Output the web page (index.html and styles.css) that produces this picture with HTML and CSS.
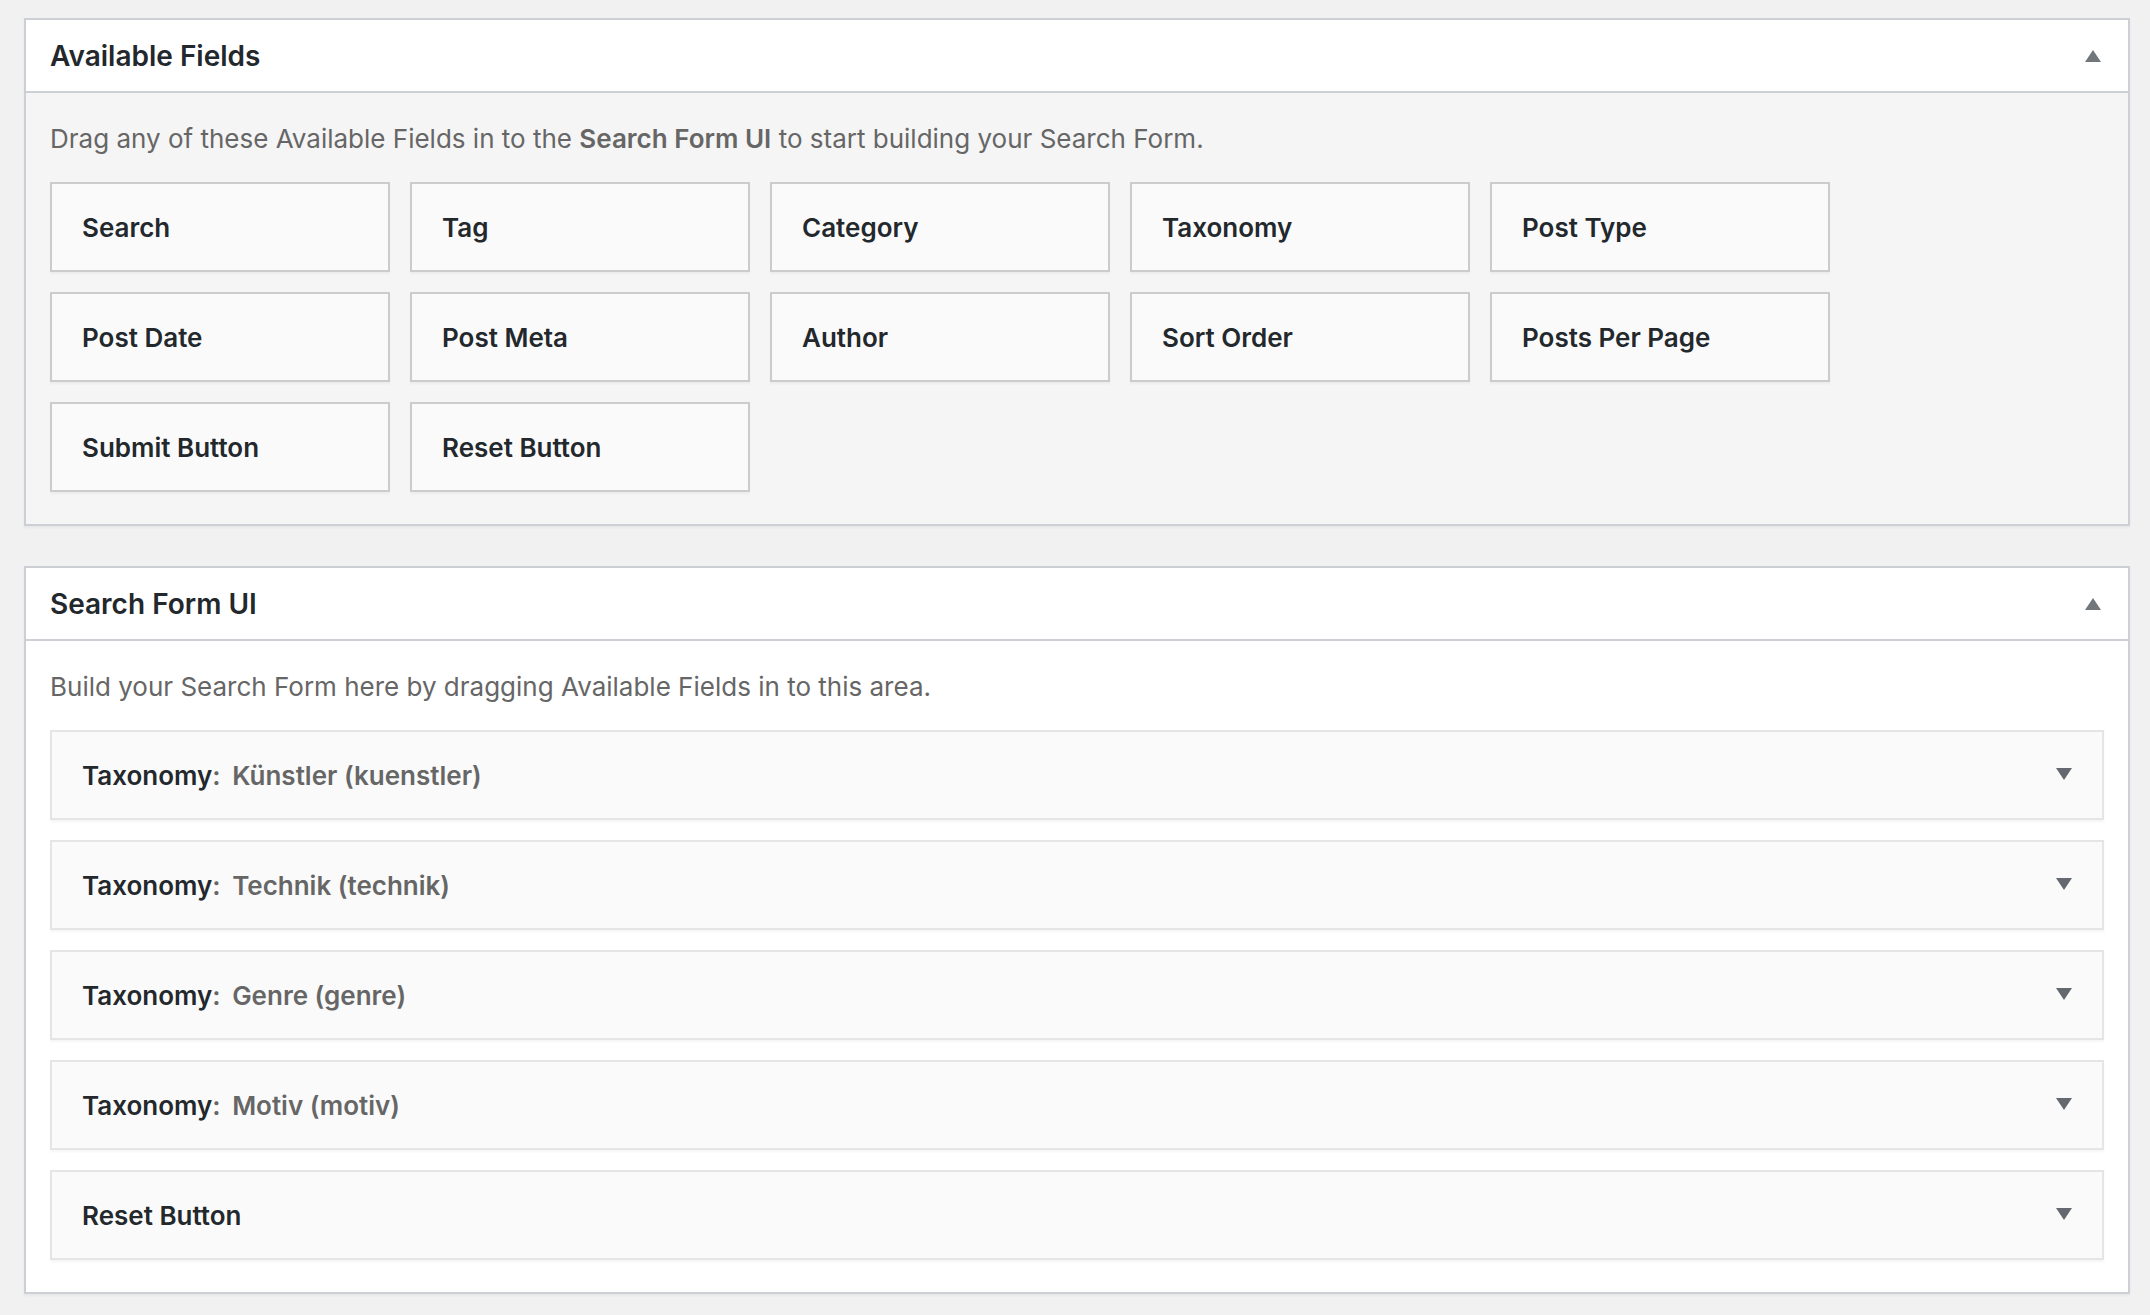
FILE: index.html
```html
<!DOCTYPE html>
<html lang="en">
<head>
<meta charset="utf-8">
<meta name="viewport" content="width=device-width, initial-scale=1">
<title>Search Form Editor</title>
<link rel="stylesheet" href="styles.css">
</head>
<body>
<main class="page">
  <section class="panel panel-available">
    <header class="panel-header">
      <h2 class="panel-title">Available Fields</h2>
      <button class="toggle" type="button" aria-label="Toggle Available Fields" aria-expanded="true"><svg class="arrow" viewBox="0 0 16 12" aria-hidden="true"><path d="M8 0 16 12H0z"/></svg></button>
    </header>
    <div class="panel-body">
      <p class="hint">Drag any of these Available Fields in to the <strong>Search Form UI</strong> to start building your Search Form.</p>
      <ul class="field-grid">
        <li class="field">Search</li>
        <li class="field">Tag</li>
        <li class="field">Category</li>
        <li class="field">Taxonomy</li>
        <li class="field">Post Type</li>
        <li class="field">Post Date</li>
        <li class="field">Post Meta</li>
        <li class="field">Author</li>
        <li class="field">Sort Order</li>
        <li class="field">Posts Per Page</li>
        <li class="field">Submit Button</li>
        <li class="field">Reset Button</li>
      </ul>
    </div>
  </section>

  <section class="panel">
    <header class="panel-header">
      <h2 class="panel-title">Search Form UI</h2>
      <button class="toggle" type="button" aria-label="Toggle Search Form UI" aria-expanded="true"><svg class="arrow" viewBox="0 0 16 12" aria-hidden="true"><path d="M8 0 16 12H0z"/></svg></button>
    </header>
    <div class="panel-body">
      <p class="hint">Build your Search Form here by dragging Available Fields in to this area.</p>
      <ul class="field-list">
        <li class="field field-row">
          <h3 class="field-title">Taxonomy<span class="detail">: <span class="name">Künstler (kuenstler)</span></span></h3>
          <button class="toggle toggle-row" type="button" aria-label="Open Künstler" aria-expanded="false"><svg class="arrow" viewBox="0 0 16 12" aria-hidden="true"><path d="M0 0H16L8 12z"/></svg></button>
        </li>
        <li class="field field-row">
          <h3 class="field-title">Taxonomy<span class="detail">: <span class="name">Technik (technik)</span></span></h3>
          <button class="toggle toggle-row" type="button" aria-label="Open Technik" aria-expanded="false"><svg class="arrow" viewBox="0 0 16 12" aria-hidden="true"><path d="M0 0H16L8 12z"/></svg></button>
        </li>
        <li class="field field-row">
          <h3 class="field-title">Taxonomy<span class="detail">: <span class="name">Genre (genre)</span></span></h3>
          <button class="toggle toggle-row" type="button" aria-label="Open Genre" aria-expanded="false"><svg class="arrow" viewBox="0 0 16 12" aria-hidden="true"><path d="M0 0H16L8 12z"/></svg></button>
        </li>
        <li class="field field-row">
          <h3 class="field-title">Taxonomy<span class="detail">: <span class="name">Motiv (motiv)</span></span></h3>
          <button class="toggle toggle-row" type="button" aria-label="Open Motiv" aria-expanded="false"><svg class="arrow" viewBox="0 0 16 12" aria-hidden="true"><path d="M0 0H16L8 12z"/></svg></button>
        </li>
        <li class="field field-row">
          <h3 class="field-title">Reset Button</h3>
          <button class="toggle toggle-row" type="button" aria-label="Open Reset Button" aria-expanded="false"><svg class="arrow" viewBox="0 0 16 12" aria-hidden="true"><path d="M0 0H16L8 12z"/></svg></button>
        </li>
      </ul>
    </div>
  </section>
</main>
</body>
</html>
```
FILE: styles.css
```css
* {
  box-sizing: border-box;
}

body {
  margin: 0;
  background: #f1f1f1;
  color: #23282d;
  font-family: Inter, "Liberation Sans", sans-serif;
  font-size: 26px;
  line-height: 38px;
}

h2, h3, p, ul {
  margin: 0;
  padding: 0;
}

ul {
  list-style: none;
}

.page {
  display: flex;
  flex-direction: column;
  gap: 40px;
  padding: 18px 20px 20px 24px;
}

.panel {
  border: 2px solid #ccd0d4;
  background: #fff;
  box-shadow: 0 2px 2px rgba(0, 0, 0, 0.04);
}

.panel-available {
  background: #f5f5f5;
}

.panel-header {
  display: flex;
  align-items: center;
  justify-content: space-between;
  padding: 17px 16px 16px 24px;
  border-bottom: 2px solid #ccd0d4;
  background: #fff;
}

.panel-title {
  font-size: 28px;
  font-weight: 600;
}

.panel-body {
  padding: 27px 24px 32px;
}

.hint {
  margin-bottom: 24px;
  color: #666;
}

.hint strong {
  font-weight: 600;
}

.field-grid {
  display: flex;
  flex-wrap: wrap;
  gap: 20px;
  max-width: 1800px;
}

.field-list {
  display: grid;
  gap: 20px;
}

.field {
  width: 340px;
  padding: 25px 30px 23px;
  border: 2px solid #ccc;
  background: #fafafa;
  box-shadow: 0 2px 2px rgba(0, 0, 0, 0.04);
  font-weight: 600;
}

.field-row {
  display: flex;
  align-items: center;
  justify-content: space-between;
  width: auto;
  padding-right: 20px;
  border-color: #e5e5e5;
}

.field-title {
  font-size: 26px;
  font-weight: 600;
}

.detail {
  color: #666;
}

.name {
  margin-left: 5px;
}

.toggle {
  display: flex;
  padding: 12px 11px;
  border: 0;
  background: none;
  color: #72777c;
}

.toggle-row {
  padding: 10px 10px 14px;
  color: #646970;
}

.arrow {
  width: 16px;
  height: 12px;
  fill: currentColor;
}
```
